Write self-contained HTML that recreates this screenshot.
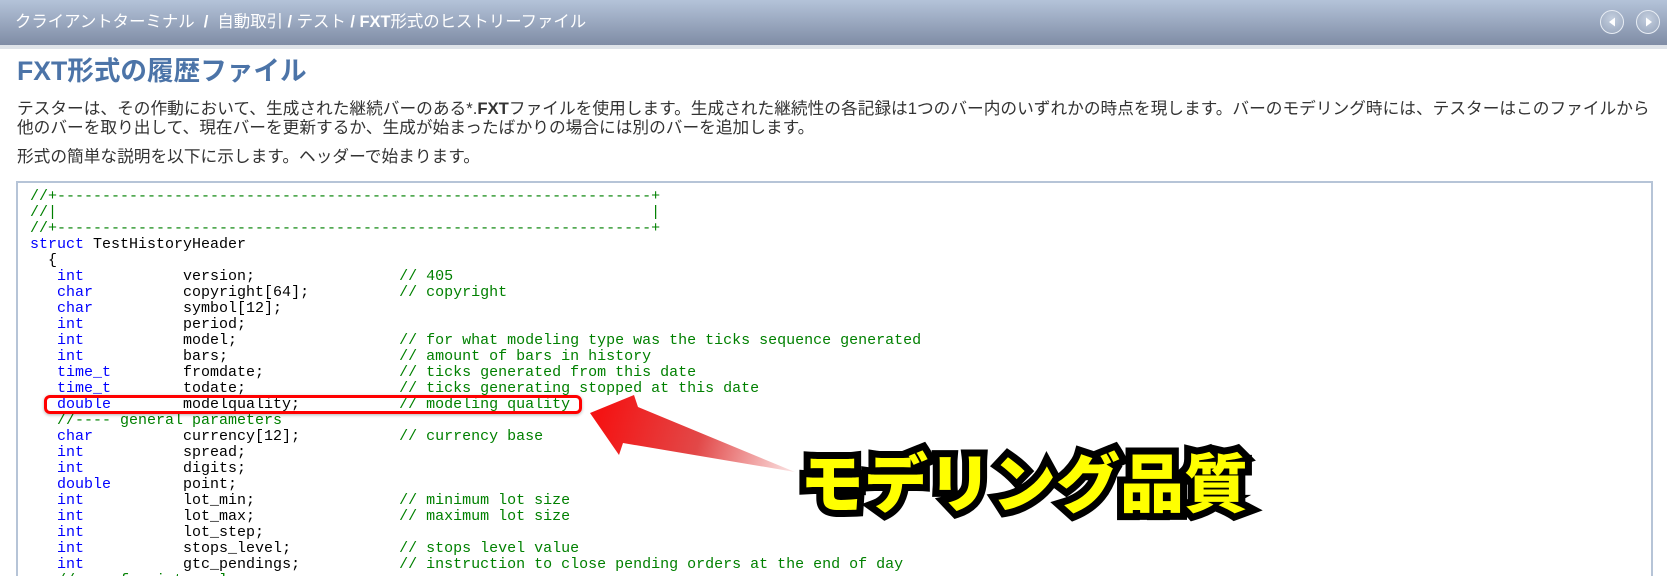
<!DOCTYPE html>
<html><head><meta charset="utf-8">
<style>
html,body{margin:0;padding:0;width:1667px;height:576px;overflow:hidden;background:#fff;}
body{font-family:"Liberation Sans","Noto Sans CJK JP",sans-serif;position:relative;}
.hdr{position:absolute;left:0;top:0;width:1667px;height:45px;background:linear-gradient(#b4c3d9,#7f8ca5);}
.strip{position:absolute;left:0;top:45px;width:1667px;height:4px;background:#dfe3e9;}
.crumb{position:absolute;left:15px;top:11px;font-size:16.4px;color:#fff;white-space:nowrap;line-height:22px;}
.crumb b{font-weight:bold;}
.btn{position:absolute;top:10px;width:22px;height:22px;border-radius:50%;border:1.5px solid #e8edf4;background:radial-gradient(circle at 50% 35%,#c4cfdf,#95a3ba);}
.t{position:absolute;left:17px;top:53px;font-size:26.6px;font-weight:bold;color:#4c74a8;white-space:nowrap;line-height:36px;}
.p{position:absolute;left:17px;font-size:16.7px;color:#333;white-space:nowrap;line-height:19px;}
.box{position:absolute;left:16px;top:181px;width:1637px;height:420px;border:2px solid #b6c4d7;box-sizing:border-box;}
pre{position:absolute;left:30px;top:189px;margin:0;font-family:"Liberation Mono",monospace;font-size:15px;line-height:16px;color:#000;}
.k{color:#0000ff}.c{color:#008000}
</style></head><body>
<div class="hdr"></div><div class="strip"></div>
<div class="crumb">クライアントターミナル&nbsp; <b>/</b> &nbsp;自動取引 <b>/</b> テスト <b>/</b> <b>FXT</b>形式のヒストリーファイル</div>
<div class="btn" style="left:1600px"><svg width="22" height="22" style="position:absolute;left:0;top:0"><polygon points="8,11 14,6.5 14,15.5" fill="#fff"/></svg></div>
<div class="btn" style="left:1636px"><svg width="22" height="22" style="position:absolute;left:0;top:0"><polygon points="15,11 9,6.5 9,15.5" fill="#fff"/></svg></div>
<div class="t">FXT形式の履歴ファイル</div>
<div class="p" style="top:99px">テスターは、その作動において、生成された継続バーのある*.<b>FXT</b>ファイルを使用します。生成された継続性の各記録は1つのバー内のいずれかの時点を現します。バーのモデリング時には、テスターはこのファイルから</div>
<div class="p" style="top:118px">他のバーを取り出して、現在バーを更新するか、生成が始まったばかりの場合には別のバーを追加します。</div>
<div class="p" style="top:147px">形式の簡単な説明を以下に示します。ヘッダーで始まります。</div>
<div class="box"></div>
<pre><span class="c">//+------------------------------------------------------------------+
//|                                                                  |
//+------------------------------------------------------------------+</span>
<span class="k">struct</span> TestHistoryHeader
  {
   <span class="k">int</span>           version;                <span class="c">// 405</span>
   <span class="k">char</span>          copyright[64];          <span class="c">// copyright</span>
   <span class="k">char</span>          symbol[12];
   <span class="k">int</span>           period;
   <span class="k">int</span>           model;                  <span class="c">// for what modeling type was the ticks sequence generated</span>
   <span class="k">int</span>           bars;                   <span class="c">// amount of bars in history</span>
   <span class="k">time_t</span>        fromdate;               <span class="c">// ticks generated from this date</span>
   <span class="k">time_t</span>        todate;                 <span class="c">// ticks generating stopped at this date</span>
   <span class="k">double</span>        modelquality;           <span class="c">// modeling quality</span>
   <span class="c">//---- general parameters</span>
   <span class="k">char</span>          currency[12];           <span class="c">// currency base</span>
   <span class="k">int</span>           spread;
   <span class="k">int</span>           digits;
   <span class="k">double</span>        point;
   <span class="k">int</span>           lot_min;                <span class="c">// minimum lot size</span>
   <span class="k">int</span>           lot_max;                <span class="c">// maximum lot size</span>
   <span class="k">int</span>           lot_step;
   <span class="k">int</span>           stops_level;            <span class="c">// stops level value</span>
   <span class="k">int</span>           gtc_pendings;           <span class="c">// instruction to close pending orders at the end of day</span>
   <span class="c">//---- for internal use</span>
</pre>
<div style="position:absolute;left:44px;top:395px;width:538px;height:19px;border:3px solid #f00;border-radius:6px;box-sizing:border-box;box-shadow:0 1px 3px rgba(0,0,0,.3);"></div>
<svg width="1667" height="576" style="position:absolute;left:0;top:0">
<defs><linearGradient id="g" x1="600" y1="420" x2="795" y2="472" gradientUnits="userSpaceOnUse"><stop offset="0" stop-color="#f41414"/><stop offset="0.5" stop-color="#e24848"/><stop offset="1" stop-color="#fbe6e6"/></linearGradient></defs>
<polygon points="590,413 634,395 638,407 795,472 623,443 619,455" fill="url(#g)"/>
</svg>
<div style="position:absolute;left:800px;top:432px;font-family:'Noto Sans CJK JP',sans-serif;font-weight:900;font-size:64px;line-height:96px;color:#ffff00;-webkit-text-stroke:14px #000;paint-order:stroke fill;white-space:nowrap;text-shadow:2px 3px 4px rgba(0,0,0,.4);">モデリング品質</div>
</body></html>
